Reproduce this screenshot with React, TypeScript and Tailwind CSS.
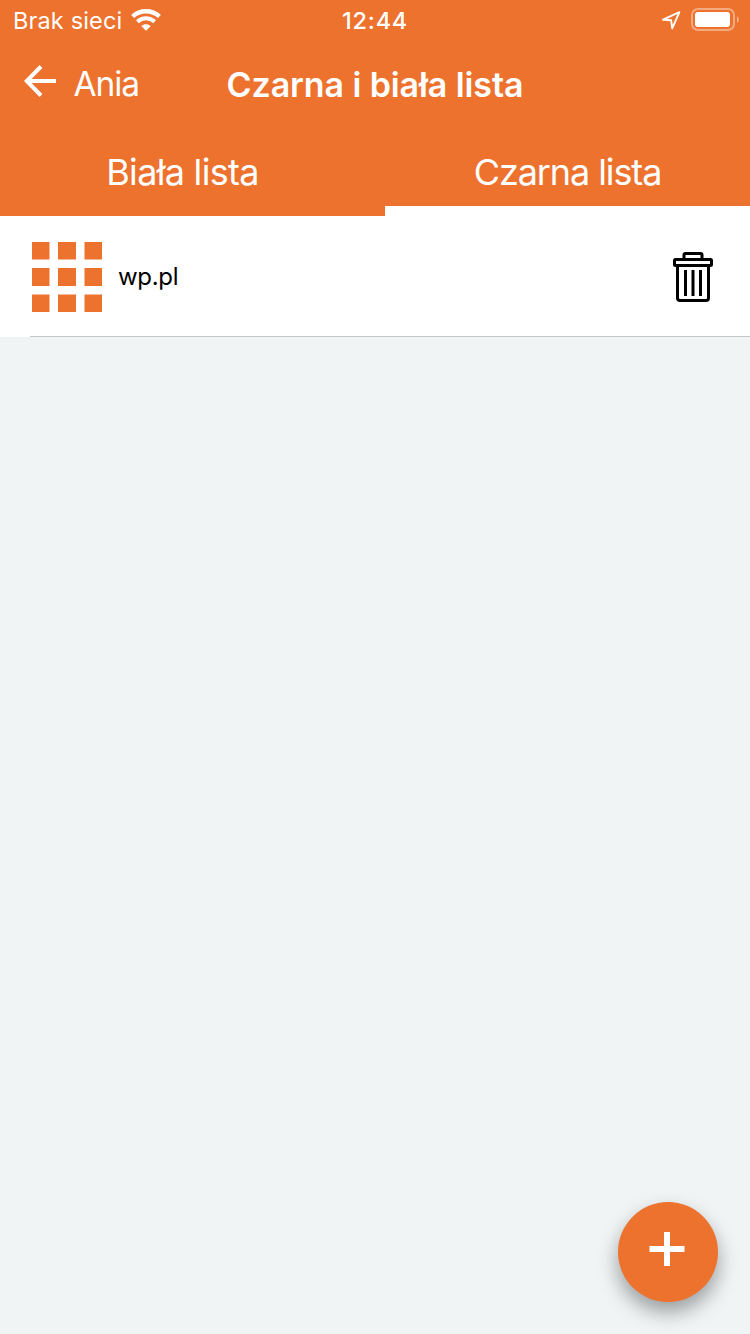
const tiles = [
  { start: 0, size: 17.5 },
  { start: 26, size: 18 },
  { start: 52.5, size: 17.5 },
];

function StatusBar() {
  return (
    <div className="grid h-10 grid-cols-3 items-center">
      <div className="flex items-center pl-[13px]">
        <span className="h-10 w-[109px] pt-px text-[23.5px] leading-10 font-normal tracking-[0.15px] whitespace-nowrap">Brak sieci</span>
        <svg className="ml-[9px] h-[22px] w-[30px]" viewBox="0 0 30 22" fill="none" stroke="white">
          <path d="M1.6 7.5C9.1.5 20.9.5 28.4 7.5" strokeWidth="4.4" />
          <path d="M6.4 12.7C11.3 8.1 18.7 8.1 23.6 12.7" strokeWidth="4" />
          <path d="M10.4 17.3C13 14.7 17 14.7 19.6 17.3L15 21.8Z" fill="white" stroke="none" />
        </svg>
      </div>
      <span className="h-10 pt-px text-center text-[23.5px] leading-10 font-medium tracking-[0.8px]">12:44</span>
      <div className="flex items-center justify-end pr-[11px]">
        <svg className="mr-[10px] h-[20px] w-5" viewBox="0 0 20 20" fill="none">
          <path d="M18.4 2.2L2 9.7L10.1 10.2L11.2 18.3Z" stroke="white" strokeWidth="1.9" strokeLinejoin="round" />
        </svg>
        <svg className="h-[24px] w-12" viewBox="0 0 48 24">
          <rect x="1" y="1" width="42" height="21" rx="6" fill="none" stroke="white" strokeOpacity=".4" strokeWidth="2" />
          <rect x="4" y="4" width="35" height="15" rx="3" fill="white" />
          <path d="M46 8C48.4 9.4 48.4 13.6 46 15Z" fill="white" fillOpacity=".45" />
        </svg>
      </div>
    </div>
  );
}

export default function App() {
  return (
    <div className="flex h-[1334px] w-[750px] flex-col bg-[#f0f4f5] font-['Inter','Liberation_Sans',sans-serif] text-white">
      <header className="flex h-[216px] flex-col bg-[#ed722e]">
        <StatusBar />
        <div className="grid h-[88px] grid-cols-[200px_350px_200px] items-center">
          <button className="flex items-center pl-6">
            <svg className="-mt-1.5 h-8 w-8" viewBox="0 0 32 32" fill="none" stroke="white" strokeWidth="4">
              <path d="M17 1.5L2.7 16L17 30.5M2.7 16H32" />
            </svg>
            <span className="ml-[17.5px] pt-px text-[33.5px] font-normal tracking-[-1.1px]">Ania</span>
          </button>
          <h1 className="text-center text-[34px] font-semibold tracking-[-0.1px] whitespace-nowrap">Czarna i biała lista</h1>
        </div>
        <nav className="grid h-[88px] grid-cols-[385px_365px] text-[36px] font-normal">
          <button className="pr-5 tracking-[-0.7px]">Biała lista</button>
          <button className="border-b-[10px] border-white pt-[10px] tracking-[-1.1px]">Czarna lista</button>
        </nav>
      </header>
      <main>
        <div className="flex h-[120px] items-center bg-white pt-[2px] pr-[36px] pl-8 text-black">
          <svg className="h-[70px] w-[70px]" viewBox="0 0 70 70" fill="#ed722e">
            {tiles.map((row) =>
              tiles.map((col) => (
                <rect key={`${col.start}-${row.start}`} x={col.start} y={row.start} width={col.size} height={row.size} />
              )),
            )}
          </svg>
          <span className="ml-4 flex-1 text-[24px] tracking-[-0.3px]">wp.pl</span>
          <svg className="h-[50px] w-[42px]" viewBox="0 0 42 50" fill="none" stroke="black" strokeWidth="3">
            <path d="M12 6V3Q12 1.5 13.5 1.5H28.5Q30 1.5 30 3V6" />
            <rect x="2.5" y="7.5" width="37" height="6" rx="1" />
            <path d="M5.5 13.5V46Q5.5 48.5 8 48.5H34Q36.5 48.5 36.5 46V13.5" />
            <path d="M13.5 18V44M21 18V44M28.5 18V44" />
          </svg>
        </div>
        <div className="flex h-px"><span className="w-[30px] bg-white" /><span className="flex-1 bg-[#c5c7c8]" /></div>
      </main>
      <button className="mt-auto mr-8 mb-8 flex h-[100px] w-[100px] items-center justify-center self-end rounded-full bg-[#ed722e] pr-0.5 pb-1.5 shadow-[0_10px_20px_rgba(0,0,0,0.36)]">
        <svg className="h-9 w-9" viewBox="0 0 36 36" fill="none" stroke="white" strokeWidth="6">
          <path d="M18 1V35M.5 18H35.5" />
        </svg>
      </button>
    </div>
  );
}
